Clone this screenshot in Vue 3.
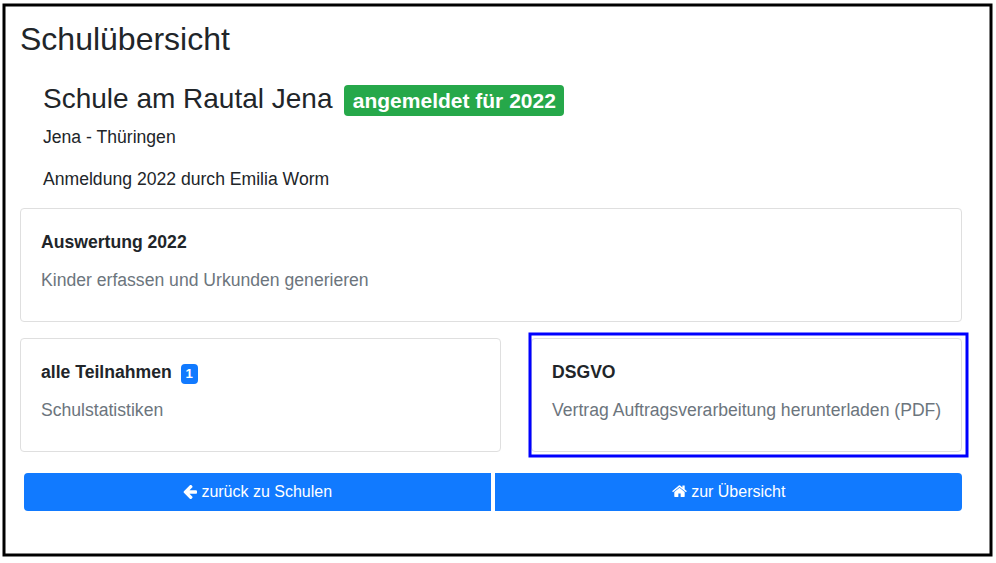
<script setup>
const school = { name: 'Schule am Rautal Jena', place: 'Jena - Thüringen' }
const cards = [
  { title: 'Auswertung 2022', text: 'Kinder erfassen und Urkunden generieren', wide: true },
  { title: 'alle Teilnahmen', text: 'Schulstatistiken', count: 1 },
  { title: 'DSGVO', text: 'Vertrag Auftragsverarbeitung herunterladen (PDF)' },
]
</script>

<template>
  <main class="page">
    <h1>Schulübersicht</h1>
    <section class="school">
      <h2>{{ school.name }}<span class="badge success">angemeldet für 2022</span></h2>
      <p>{{ school.place }}</p>
      <p>Anmeldung 2022 durch Emilia Worm</p>
    </section>
    <section class="cards">
      <article v-for="card in cards" :key="card.title" class="card" :class="{ wide: card.wide }">
        <h3>{{ card.title }}<span v-if="card.count" class="badge count">{{ card.count }}</span></h3>
        <p>{{ card.text }}</p>
      </article>
    </section>
    <nav class="actions">
      <button type="button">
        <svg class="arrow" viewBox="0 0 1536 1536" aria-hidden="true">
          <path d="M1536 768v128q0 53-32.500 90.500t-84.500 37.500h-704l293 294q38 36 38 90t-38 90l-75 76q-37 37-90 37-52 0-91-37l-651-652q-37-37-37-90 0-52 37-91l651-650q38-38 91-38 52 0 90 38l75 74q38 38 38 91t-38 91l-293 293h704q52 0 84.500 37.500t32.500 90.500z" transform="translate(0 -64)" />
        </svg>
        <span>zurück zu Schulen</span>
      </button>
      <button type="button">
        <svg class="home" viewBox="0 0 1664 1312" aria-hidden="true">
          <path d="M1408 768v480q0 26-19 45t-45 19h-384v-384h-256v384h-384q-26 0-45-19t-19-45v-480q0-1 .5-3t.5-3l575-474 575 474q1 2 1 6zm223-69l-62 74q-8 9-21 11h-3q-13 0-21-7l-692-577-692 577q-12 8-24 7-13-2-21-11l-62-74q-8-10-7-23.500t11-21.500l719-599q32-26 76-26t76 26l244 204v-195q0-14 9-23t23-9h192q14 0 23 9t9 23v408l219 182q10 8 11 21.500t-7 23.500z" />
        </svg>
        <span>zur Übersicht</span>
      </button>
    </nav>
    <svg class="marks" viewBox="0 0 996 563" aria-hidden="true">
      <rect x="4" y="5" width="987" height="550" stroke="#000" />
      <rect x="530" y="334" width="437" height="122" stroke="#00f" />
    </svg>
  </main>
</template>

<style>
body {
  margin: 0;
  background: #fff;
}
</style>

<style scoped>
.page {
  position: relative;
  box-sizing: border-box;
  width: 996px;
  height: 563px;
  padding: 20px 34px 0 20px;
  overflow: hidden;
  color: #212529;
  font: 17.6px/26px "Liberation Sans", Arial, sans-serif;
}
h1, h2, h3, p {
  margin: 0;
}
h1 {
  font-size: 32px;
  font-weight: 400;
  line-height: 38px;
}
.school {
  box-sizing: border-box;
  height: 150px;
  padding: 24px 23px 0;
}
h2 {
  display: flex;
  align-items: flex-start;
  height: 42px;
  font-size: 28px;
  font-weight: 400;
  line-height: 34px;
}
.school p + p {
  margin-top: 16px;
}
.badge {
  box-sizing: border-box;
  border-radius: 4px;
  color: #fff;
  font-weight: 700;
  text-align: center;
}
.success {
  width: 220px;
  height: 31px;
  margin: 3px 0 0 11.3px;
  padding-left: 1px;
  background: #26a84a;
  font-size: 21px;
  line-height: 31px;
}
.cards {
  display: grid;
  grid-template-columns: 481px 431px;
  justify-content: space-between;
  row-gap: 16px;
}
.card {
  box-sizing: border-box;
  height: 114px;
  padding: 20px;
  border: 1px solid #dfdfdf;
  border-radius: 4px;
}
.wide {
  grid-column: 1 / -1;
}
h3 {
  display: flex;
  font-size: 17.6px;
  line-height: 26px;
}
.card p {
  margin-top: 12px;
  color: #6c757d;
  white-space: nowrap;
}
.count {
  width: 17px;
  height: 20px;
  margin: 5px 0 0 9px;
  background: #117aff;
  font-size: 13.2px;
  line-height: 20px;
}
.actions {
  display: grid;
  grid-template-columns: 1fr 1fr;
  gap: 4px;
  margin: 21px 0 0 4px;
}
button {
  display: flex;
  align-items: center;
  justify-content: center;
  gap: 4.5px;
  height: 38px;
  padding: 0;
  border: 0;
  border-radius: 4px 0 0 4px;
  background: #117aff;
  color: #fff;
  font: 16px/24px "Liberation Sans", Arial, sans-serif;
}
button + button {
  border-radius: 0 4px 4px 0;
}
button svg {
  fill: currentColor;
}
.arrow {
  width: 14px;
  height: 14px;
}
.home {
  width: 15px;
  height: 12px;
  margin-bottom: 2px;
}
.marks {
  position: absolute;
  inset: 0;
  width: 996px;
  height: 563px;
  fill: none;
  stroke-width: 3;
  pointer-events: none;
}
</style>
